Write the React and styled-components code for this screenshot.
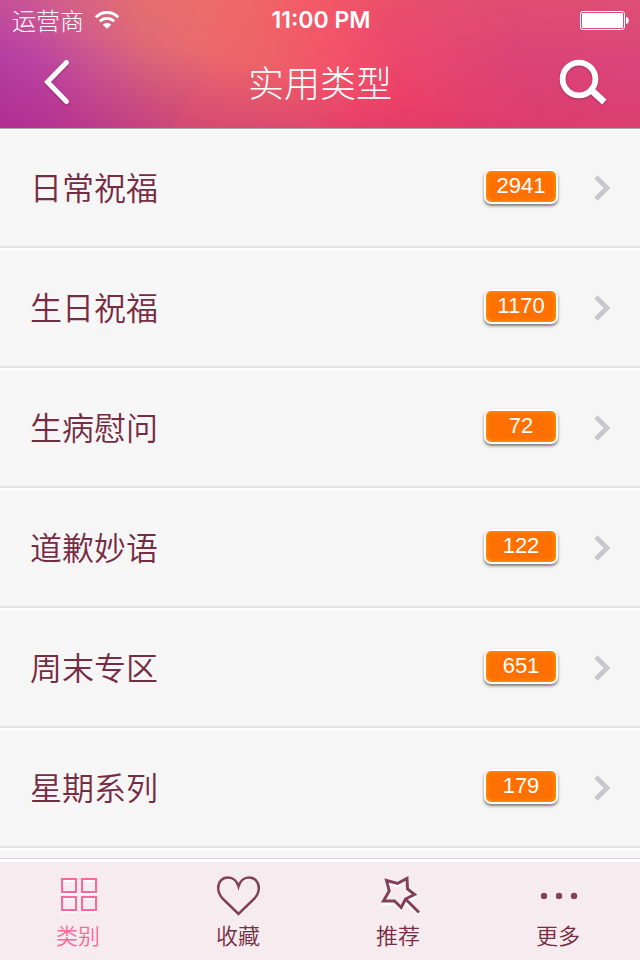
import React from 'react'
import styled, { createGlobalStyle } from 'styled-components'

const categories = [
  { name: '日常祝福', count: 2941 },
  { name: '生日祝福', count: 1170 },
  { name: '生病慰问', count: 72 },
  { name: '道歉妙语', count: 122 },
  { name: '周末专区', count: 651 },
  { name: '星期系列', count: 179 },
]

const GridIcon = () => (
  <svg width="44" height="44" viewBox="0 0 44 44" fill="none" strokeWidth="2">
    <g stroke="#fff">
      <path d="M6 7h14v13H6zM26 7h14v13H26zM6 25h14v13H6zM26 25h14v13H26z" />
    </g>
    <g stroke="currentColor">
      <path d="M6 5h14v13H6zM26 5h14v13H26zM6 23h14v13H6zM26 23h14v13H26z" />
    </g>
  </svg>
)

const HeartIcon = () => (
  <svg width="44" height="44" viewBox="0 0 44 44" fill="none" strokeWidth="2.500">
    <path
      stroke="#fff"
      d="M22.500 41.500L7 26.500C3 22.500 2.200 18.500 2.200 15C2.200 8.800 6.500 4.600 12 4.600C17 4.600 21 8.400 22.500 14C24 8.400 28 4.600 33 4.600C38.500 4.600 42.800 8.800 42.800 15C42.800 18.500 41.800 22.500 38 26.500Z"
    />
    <path
      stroke="#834058"
      d="M22.500 40L7 25C3 21 2.200 17.500 2.200 14C2.200 7.600 6.500 3.400 12 3.400C17 3.400 21 7.200 22.500 12.500C24 7.200 28 3.400 33 3.400C38.500 3.400 42.800 7.600 42.800 14C42.800 17.500 42 21 38 25Z"
    />
  </svg>
)

const WandIcon = () => (
  <svg width="46" height="44" viewBox="-1 0 46 44" fill="none" strokeWidth="3">
    <g stroke="#fff" transform="translate(0 2)">
      <path d="M10.500 6.500L21.500 9.500L31 4.500L31.500 15L38.500 20.500L29.500 25L25.200 33.500L18.500 27.500H7.500L13.200 17Z" />
      <path d="M29.500 26L43 38.500" />
    </g>
    <g stroke="#834058">
      <path d="M10.500 6.500L21.500 9.500L31 4.500L31.500 15L38.500 20.500L29.500 25L25.200 33.500L18.500 27H7.500L13.200 17Z" />
      <path d="M29.500 25L43 38.500" />
    </g>
  </svg>
)

const DotsIcon = () => (
  <svg width="44" height="44" viewBox="0 0 44 44">
    <g fill="#fff">
      <circle cx="8" cy="23" r="3" />
      <circle cx="23" cy="23" r="3" />
      <circle cx="38" cy="23" r="3" />
    </g>
    <g fill="#834058">
      <circle cx="8" cy="22" r="3.200" />
      <circle cx="23" cy="22" r="3.200" />
      <circle cx="38" cy="22" r="3.200" />
    </g>
  </svg>
)

const tabs = [
  { label: '类别', Icon: GridIcon, active: true },
  { label: '收藏', Icon: HeartIcon },
  { label: '推荐', Icon: WandIcon },
  { label: '更多', Icon: DotsIcon },
]

const App = () => {
  return (
    <>
      <GlobalStyle />
      <Screen>
        <Header>
          <Facets viewBox="0 0 640 128" preserveAspectRatio="none" aria-hidden="true">
            <path d="M222 0L205 30V70L172 128H640V0Z" fill="#ff5a60" opacity="0.12" />
            <path d="M390 70L472 128H320Z" fill="#ff3058" opacity="0.12" />
          </Facets>
          <StatusBar>
            <Carrier>
              运营商
              <svg width="26" height="20" viewBox="0 0 26 20" fill="none" stroke="#fff">
                <path d="M1.800 7.200C8 0.800 18 0.800 24.200 7.200" strokeWidth="3" />
                <path d="M5.800 11.300C9.800 7.300 16.200 7.300 20.200 11.300" strokeWidth="2.800" />
                <path d="M13 18.800L8.800 14.700C11 12.500 15 12.500 17.200 14.700Z" fill="#fff" stroke="none" />
              </svg>
            </Carrier>
            <Time>11:00 PM</Time>
            <Battery>
              <svg width="50" height="20" viewBox="0 0 50 20">
                <rect x="0.500" y="1.500" width="44" height="18" rx="2.500" fill="none" stroke="#fff" />
                <rect x="2" y="3" width="41" height="15" rx="1" fill="#fff" />
                <path d="M46 7C49.700 7 49.700 14 46 14Z" fill="#fff" />
              </svg>
            </Battery>
          </StatusBar>
          <NavBar>
            <NavButton type="button" aria-label="返回">
              <svg width="56" height="56" viewBox="0 0 56 56" fill="none" strokeWidth="5" strokeLinecap="round">
                <path d="M37.500 6.500L18.500 26L37.500 45.500" stroke="#fff" />
              </svg>
            </NavButton>
            <Title>实用类型</Title>
            <NavButton type="button" aria-label="搜索">
              <svg width="56" height="56" viewBox="0 0 56 56" fill="none" stroke="#fff">
                <circle cx="24" cy="23" r="16.400" strokeWidth="5.800" />
                <path d="M35 33L49.300 46" strokeWidth="6.500" />
              </svg>
            </NavButton>
          </NavBar>
        </Header>

        <List>
          {categories.map((item) => (
            <Row key={item.name}>
              <RowLink href="#">
                <Name>{item.name}</Name>
                <Badge>{item.count}</Badge>
                <svg width="18" height="26" viewBox="0 0 18 26" fill="none">
                  <path d="M2 2L13 13L2 24" stroke="#c7c7cc" strokeWidth="4.600" />
                </svg>
              </RowLink>
            </Row>
          ))}
          <Row />
        </List>

        <TabBar>
          {tabs.map(({ label, Icon, active }) => (
            <Tab type="button" key={label} $active={active}>
              <Icon />
              {label}
            </Tab>
          ))}
        </TabBar>
      </Screen>
    </>
  )
}

export default App

const GlobalStyle = createGlobalStyle`
  * {
    box-sizing: border-box;
  }
  body {
    margin: 0;
    font-family: 'Noto Sans CJK SC', sans-serif;
    font-weight: 300;
    background: #f6f6f6;
  }
`

const Screen = styled.div`
  display: flex;
  flex-direction: column;
  height: 100vh;
  overflow: hidden;
`

const Header = styled.header`
  position: relative;
  flex: none;
  color: #fff;
  background:
    linear-gradient(to bottom, rgba(240, 130, 90, 0.16), rgba(216, 48, 96, 0) 45%, rgba(215, 25, 80, 0.2)),
    linear-gradient(to top right, rgba(150, 35, 160, 0.45), rgba(150, 35, 160, 0) 45%),
    linear-gradient(75deg, #b840a4 0%, #c04aa2 8%, #d25c8c 17%, #e06876 25%, #e9696e 34%, #ec6469 42%, #f2526a 52%, #e8456e 62%, #d8407a 80%, #d6447e 100%);
  box-shadow: 0 1px 0 #a9a9a9;
  z-index: 1;
`

const Facets = styled.svg`
  position: absolute;
  inset: 0;
  width: 100%;
  height: 100%;
`

const StatusBar = styled.div`
  position: relative;
  display: grid;
  grid-template-columns: 1fr auto 1fr;
  align-items: center;
  height: 40px;
  padding: 0 10px 0 12px;
`

const Carrier = styled.div`
  display: flex;
  align-items: center;
  gap: 10px;
  font-size: 24px;
  line-height: 40px;
`

const Time = styled.div`
  font-family: Inter, sans-serif;
  font-size: 23px;
  font-weight: 600;
`

const Battery = styled.div`
  display: flex;
  justify-content: flex-end;
`

const NavBar = styled.div`
  position: relative;
  display: flex;
  align-items: center;
  justify-content: space-between;
  height: 88px;
  padding: 0 29px;
`

const NavButton = styled.button`
  display: flex;
  padding: 0;
  border: none;
  background: none;
  cursor: pointer;

  svg {
    filter: drop-shadow(0 1px 1px rgba(120, 20, 60, 0.5));
  }
`

const Title = styled.h1`
  margin: 0;
  padding-bottom: 6px;
  font-size: 36px;
  font-weight: 300;
  line-height: 44px;
`

const List = styled.ul`
  flex: 1;
  min-height: 0;
  margin: 0;
  padding: 0;
  list-style: none;
  overflow: hidden;
`

const Row = styled.li`
  height: 120px;
  border-top: 2px solid #fdfdfd;
  border-bottom: 2px solid #e3e3e3;
  background: #f6f6f6;
`

const RowLink = styled.a`
  display: flex;
  align-items: center;
  height: 100%;
  padding: 0 28px 0 30px;
  color: #762c42;
  text-decoration: none;

  svg {
    margin-left: 36px;
  }
`

const Name = styled.span`
  flex: 1;
  padding-bottom: 4px;
  font-size: 32px;
  font-weight: 350;
  line-height: 40px;
`

const Badge = styled.span`
  width: 74px;
  height: 35px;
  margin-bottom: 4px;
  border: 2px solid #fff;
  border-radius: 7px;
  background: #ff7000;
  box-shadow: 0 2px 3px rgba(0, 0, 0, 0.5), inset 0 0 4px #ffa800;
  color: #fff;
  font-family: 'Liberation Sans', sans-serif;
  font-size: 22px;
  line-height: 30px;
  text-align: center;
`

const TabBar = styled.nav`
  position: relative;
  display: flex;
  flex: none;
  height: 102px;
  border-top: 1px solid #e4cfdf;
  background: #f6ecf0;
  box-shadow: inset 0 3px 0 #fff;
`

const Tab = styled.button`
  display: flex;
  flex: 1;
  flex-direction: column;
  align-items: center;
  padding: 15px 4px 0 0;
  border: none;
  background: none;
  color: ${({ $active }) => ($active ? '#ff6699' : '#762c42')};
  font-family: inherit;
  font-size: 22px;
  font-weight: 350;
  line-height: 32px;
  cursor: pointer;
`
